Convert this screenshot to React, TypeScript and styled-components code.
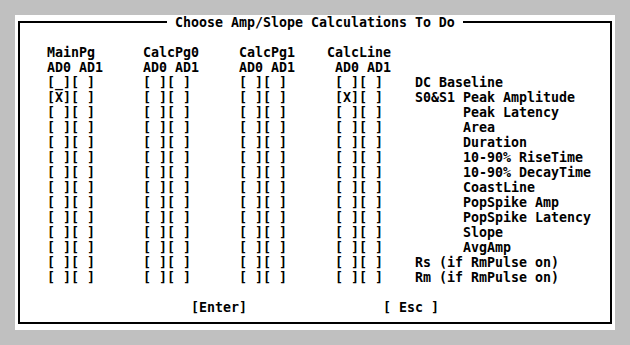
import { Fragment } from 'react';
import styled, { createGlobalStyle } from 'styled-components';

const CH = 8;
const ROW = 15;

const GlobalStyle = createGlobalStyle`
  html, body {
    margin: 0;
    padding: 0;
    background: #c0c0c0;
  }
`;

const Screen = styled.div`
  width: 630px;
  height: 345px;
  box-sizing: border-box;
  padding: 15px;
  background: #c0c0c0;
  font-family: "DejaVu Sans Mono", "Liberation Mono", monospace;
  font-weight: bold;
  font-size: 13.29px;
  line-height: ${ROW}px;
  color: #000;
`;

const Dialog = styled.div`
  width: 600px;
  height: 315px;
  box-sizing: border-box;
  padding: 6px 3px;
  background: #fff;
`;

const Frame = styled.div`
  position: relative;
  height: 100%;
  box-sizing: border-box;
  border: 2px solid #000;
  padding: 22px 0 0 27px;
`;

const Title = styled.div`
  position: absolute;
  top: -8px;
  left: 147px;
  padding: 0 ${CH}px;
  background: #fff;
  white-space: pre;
`;

const Grid = styled.div`
  display: grid;
  grid-template-columns: ${12 * CH}px ${12 * CH}px ${11 * CH}px ${11 * CH}px 1fr;
  grid-auto-rows: ${ROW}px;
  white-space: pre;
`;

const Cell = styled.div<{ $indent?: number }>`
  padding-left: ${(p) => (p.$indent ?? 0) * CH}px;
`;

const Buttons = styled.div`
  display: flex;
  gap: ${17 * CH}px;
  margin-top: ${ROW}px;
  padding-left: ${18 * CH}px;
  height: ${ROW}px;
  white-space: pre;
`;

type Mark = ' ' | 'X' | '_';

interface Row {
  label: string;
  sub?: boolean;
  marks?: Partial<Record<string, Mark>>;
}

const rows: Row[] = [
  { label: 'DC Baseline', marks: { main0: '_' } },
  { label: 'S0&S1 Peak Amplitude', marks: { main0: 'X', line0: 'X' } },
  { label: 'Peak Latency', sub: true },
  { label: 'Area', sub: true },
  { label: 'Duration', sub: true },
  { label: '10-90% RiseTime', sub: true },
  { label: '10-90% DecayTime', sub: true },
  { label: 'CoastLine', sub: true },
  { label: 'PopSpike Amp', sub: true },
  { label: 'PopSpike Latency', sub: true },
  { label: 'Slope', sub: true },
  { label: 'AvgAmp', sub: true },
  { label: 'Rs (if RmPulse on)' },
  { label: 'Rm (if RmPulse on)' },
];

const pages = [
  { key: 'main', name: 'MainPg', indent: 0 },
  { key: 'pg0', name: 'CalcPg0', indent: 0 },
  { key: 'pg1', name: 'CalcPg1', indent: 0 },
  { key: 'line', name: 'CalcLine', indent: 1 },
];

const box = (m?: Mark) => `[${m ?? ' '}]`;

const App = () => {
  return (
    <Screen>
      <GlobalStyle />
      <Dialog>
        <Frame>
          <Title>Choose Amp/Slope Calculations To Do</Title>
          <Grid>
            {pages.map((p) => (
              <Cell key={p.key}>{p.name}</Cell>
            ))}
            <Cell />
            {pages.map((p) => (
              <Cell key={p.key + '-ad'} $indent={p.indent}>AD0 AD1</Cell>
            ))}
            <Cell />
            {rows.map((r) => (
              <Fragment key={r.label}>
                {pages.map((p) => (
                  <Cell key={p.key} $indent={p.indent}>
                    {box(r.marks?.[p.key + '0'])}
                    {box(r.marks?.[p.key + '1'])}
                  </Cell>
                ))}
                <Cell $indent={r.sub ? 6 : 0}>{r.label}</Cell>
              </Fragment>
            ))}
          </Grid>
          <Buttons>
            <span>[Enter]</span>
            <span>[ Esc ]</span>
          </Buttons>
        </Frame>
      </Dialog>
    </Screen>
  );
};

export default App;
